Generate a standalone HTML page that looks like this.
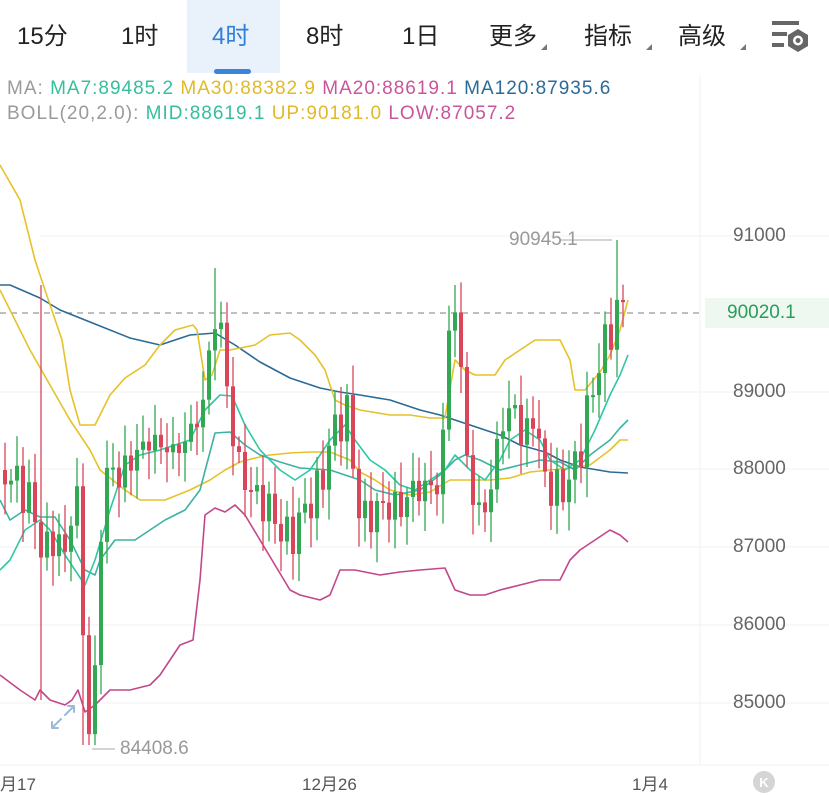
<!DOCTYPE html>
<html><head><meta charset="utf-8">
<style>
html,body{margin:0;padding:0;background:#fff;}
body{width:829px;height:795px;overflow:hidden;position:relative;font-family:"Liberation Sans","Noto Sans CJK SC",sans-serif;}
.tab{position:absolute;top:22px;font-size:24px;color:#222;line-height:30px;}
.act{position:absolute;left:187px;top:0;width:93px;height:73px;background:#e9f1fb;}
.bar{position:absolute;left:214px;top:69px;width:37px;height:5px;border-radius:3px;background:#3a85d9;}
.tri{position:absolute;width:0;height:0;border-left:6px solid transparent;border-bottom:6px solid #777;}
.leg{position:absolute;left:7px;font-size:19px;letter-spacing:1px;white-space:nowrap;}
.ax{position:absolute;left:733px;font-size:19px;color:#666;}
.bx{position:absolute;font-size:17px;color:#555;top:770px;}
</style></head><body>
<div class="act"></div><div class="bar"></div>
<div class="tab" style="left:17px">15分</div>
<div class="tab" style="left:121px">1时</div>
<div class="tab" style="left:212px;color:#2f7ed8">4时</div>
<div class="tab" style="left:306px">8时</div>
<div class="tab" style="left:402px">1日</div>
<div class="tab" style="left:489px">更多</div><div class="tri" style="left:541px;top:44px"></div>
<div class="tab" style="left:584px">指标</div><div class="tri" style="left:646px;top:44px"></div>
<div class="tab" style="left:678px">高级</div><div class="tri" style="left:740px;top:44px"></div>
<svg style="position:absolute;left:0;top:0" width="829" height="795">
<rect x="772" y="21" width="27" height="4" fill="#666"/>
<rect x="772" y="32" width="15" height="4" fill="#666"/>
<rect x="772" y="43" width="12" height="4" fill="#666"/>
<polygon points="798,29 808,35 808,46 798,52 788,46 788,35" fill="#666"/>
<circle cx="798" cy="40.5" r="5" fill="#fff"/><circle cx="798" cy="40.5" r="2.5" fill="#666"/>
</svg>
<div class="leg" style="top:78px"><span style="color:#9a9a9a">MA: </span><span style="color:#35bf9c">MA7:89485.2 </span><span style="color:#e2b928">MA30:88382.9 </span><span style="color:#c9559a">MA20:88619.1 </span><span style="color:#2c6a96">MA120:87935.6</span></div>
<div class="leg" style="top:103px"><span style="color:#9a9a9a">BOLL(20,2.0): </span><span style="color:#35bf9c">MID:88619.1 </span><span style="color:#e2b928">UP:90181.0 </span><span style="color:#c9559a">LOW:87057.2</span></div>

<svg id="ch" style="position:absolute;left:0;top:0" width="829" height="795">
<g stroke="#f1f1f1" stroke-width="1">
<line x1="40" y1="236" x2="829" y2="236"/><line x1="0" y1="392" x2="829" y2="392"/><line x1="0" y1="469" x2="829" y2="469"/><line x1="0" y1="547" x2="829" y2="547"/><line x1="0" y1="625" x2="829" y2="625"/><line x1="0" y1="703" x2="829" y2="703"/>
<line x1="700" y1="75" x2="700" y2="765"/><line x1="0" y1="765" x2="829" y2="765"/>
</g>
<rect x="705" y="298" width="124" height="30" fill="#eef8f1"/>
<line x1="0" y1="313" x2="700" y2="313" stroke="#999" stroke-width="1.3" stroke-dasharray="6,5"/>
<g fill="none" stroke-width="1.6" stroke-linejoin="round">
<polyline stroke="#2c6a96" points="0,285 10,285 40,298 60,310 90,322 130,338 160,345 190,335 215,333 235,345 260,362 290,378 320,388 340,392 360,395 390,400 420,410 440,415 470,425 500,435 520,445 545,452 560,460 580,467 610,472 628,473"/>
<polyline stroke="#e6c229" points="0,165 20,200 35,260 45,290 62,340 70,390 80,425 95,425 110,395 125,378 145,365 160,345 175,330 193,325 197,330 205,380 212,375 220,350 230,350 255,345 270,335 290,333 300,340 315,355 325,370 335,400 345,405 360,410 390,415 410,415 430,418 445,418 455,360 465,370 475,375 495,375 505,360 520,350 535,340 560,340 570,360 575,390 585,390 600,372 610,355 620,330 628,300"/>
<polyline stroke="#e6c229" points="0,290 15,320 30,350 50,385 70,420 90,450 100,470 110,478 125,490 140,500 165,500 190,490 210,480 225,470 240,462 255,458 270,455 290,453 310,452 330,452 350,460 360,472 375,480 390,490 410,495 430,492 450,480 470,480 490,480 510,478 530,472 550,470 570,468 590,465 610,450 620,440 628,440"/>
<polyline stroke="#c2478a" points="0,675 20,690 35,700 40,690 50,700 65,705 72,700 78,690 85,712 95,705 110,690 130,690 150,685 160,675 170,660 180,645 193,640 200,580 205,515 215,508 225,512 235,505 245,515 260,540 275,565 290,590 300,595 320,600 330,595 340,570 355,570 380,575 400,572 420,570 445,568 455,590 470,595 485,595 500,590 520,585 540,580 560,580 570,560 580,550 595,540 610,530 620,535 628,542"/>
<polyline stroke="#3cb3a2" points="0,500 10,520 25,510 40,517 55,517 70,540 85,570 95,575 100,560 115,540 135,540 150,530 165,520 185,510 200,490 215,433 230,432 245,445 260,455 280,462 300,468 330,470 345,475 360,480 375,490 395,495 420,490 440,475 455,460 465,455 480,460 500,470 520,465 540,460 560,462 575,470 590,455 610,440 620,428 628,420"/>
<polyline stroke="#2fc7a4" points="0,570 10,560 25,530 40,520 50,530 65,555 85,585 95,560 110,510 125,465 140,455 160,450 175,445 190,440 205,410 220,395 232,396 245,425 260,450 280,470 295,480 310,470 320,455 330,440 345,425 355,440 370,460 385,470 400,485 415,490 430,480 445,470 455,455 470,470 485,480 500,460 510,440 525,430 540,440 550,460 565,470 580,460 595,430 610,395 620,375 628,355"/>
</g>
<g id="cd"></g>
<g stroke="#aaa" stroke-width="1"><line x1="561" y1="240" x2="612" y2="240"/><line x1="92" y1="749" x2="115" y2="749"/></g>
<g fill="none" stroke="#9fb8d8" stroke-width="2" stroke-linecap="round"><path d="M52 728 L61 719 M52 728 L52 722 M52 728 L58 728 M65 715 L74 706 M74 706 L68 706 M74 706 L74 712"/></g>
<circle cx="764" cy="782" r="11" fill="#d5d5d5"/>
<text x="764" y="787" fill="#fff" font-size="13" font-weight="bold" text-anchor="middle" font-family="Liberation Sans">K</text>
</svg>
<div style="position:absolute;left:509px;top:229px;font-size:19px;color:#999">90945.1</div>
<div style="position:absolute;left:120px;top:738px;font-size:19px;color:#999">84408.6</div>
<div class="ax" style="top:225px">91000</div>
<div class="ax" style="top:381px">89000</div>
<div class="ax" style="top:458px">88000</div>
<div class="ax" style="top:536px">87000</div>
<div class="ax" style="top:614px">86000</div>
<div class="ax" style="top:692px">85000</div>
<div class="ax" style="top:302px;left:727px;color:#2a9d5a">90020.1</div>
<div class="bx" style="left:0">月17</div>
<div class="bx" style="left:302px">12月26</div>
<div class="bx" style="left:632px">1月4</div>
<script>
(function(){
var P=[[0,470],[15,480],[30,500],[45,560],[55,530],[65,560],[75,470],[82,600],[88,740],[95,680],[100,530],[110,460],[120,480],[130,460],[140,450],[150,440],[160,445],[170,450],[180,450],[190,430],[200,420],[210,350],[215,320],[222,330],[228,400],[235,450],[240,470],[250,490],[260,500],[270,510],[280,530],[290,540],[300,520],[310,500],[320,490],[330,440],[340,420],[350,410],[355,500],[365,520],[375,510],[390,505],[400,510],[410,490],[420,490],[430,485],[440,490],[450,310],[455,310],[460,360],[465,420],[470,500],[480,510],[490,500],[500,420],[510,420],[515,400],[520,440],[530,430],[535,400],[540,460],[550,490],[560,490],[570,480],[580,450],[590,400],[600,360],[610,330],[615,320],[620,300],[627,313]];
function f(x){for(var i=1;i<P.length;i++){if(x<=P[i][0]){var a=P[i-1],b=P[i];return a[1]+(b[1]-a[1])*(x-a[0])/(b[0]-a[0]);}}return 313;}
var g=document.getElementById('cd'),s='',prev=f(0);
var spikes=[[41,285,700],[215,268,0],[455,285,0],[617,240,0],[83,0,745],[89,0,745]];
for(var x=5;x<=628;x+=6){
 var n=Math.sin(x*1.7)*14+Math.sin(x*0.63)*9;
 var c=f(x)+n, o=prev;
 var tp=Math.min(o,c)-8-Math.abs(Math.sin(x*2.3))*22, bt=Math.max(o,c)+8+Math.abs(Math.cos(x*1.9))*22;
 for(var k=0;k<spikes.length;k++){var sp=spikes[k];if(Math.abs(x-sp[0])<3){if(sp[1])tp=sp[1];if(sp[2])bt=sp[2];}}
 var col=c<o?'#33a853':'#d9465a';
 var y1=Math.min(o,c),h=Math.max(Math.abs(o-c),2);
 s+='<line x1="'+x+'" y1="'+tp.toFixed(1)+'" x2="'+x+'" y2="'+bt.toFixed(1)+'" stroke="'+col+'" stroke-width="1.3"/>';
 s+='<rect x="'+(x-2)+'" y="'+y1.toFixed(1)+'" width="4" height="'+h.toFixed(1)+'" fill="'+col+'"/>';
 prev=c;
}
g.innerHTML=s;
})();
</script>
</body></html>
